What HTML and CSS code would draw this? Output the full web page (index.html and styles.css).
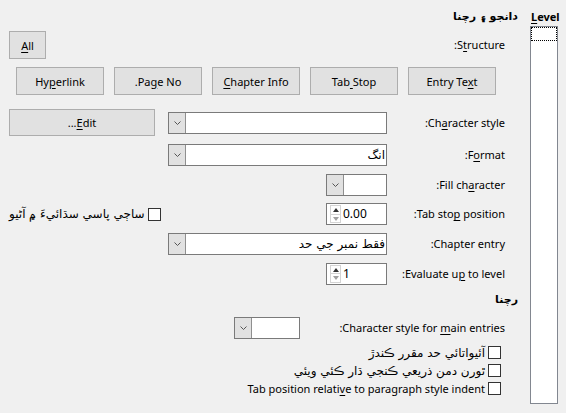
FILE: index.html
```html
<!DOCTYPE html>
<html lang="sd">
<head>
<meta charset="utf-8">
<title>Entries</title>
<link rel="stylesheet" href="styles.css">
</head>
<body>
<div class="dialog" dir="rtl">
  <div class="level-col">
    <div class="level-label" dir="ltr"><u>L</u>evel</div>
    <div class="level-list"><div class="level-focus"></div></div>
  </div>
  <div class="main">
    <div class="heading ar">دانجو ۽ رچنا</div>
    <div class="section">
      <div class="structure-row">
        <span class="label">S<u>t</u>ructure:</span>
        <button class="btn btn-all"><u>A</u>ll</button>
      </div>
      <div class="btn-row">
        <button class="btn btn-tok">Entry Te<u>x</u>t</button>
        <button class="btn btn-tok">Tab<u> </u>Stop</button>
        <button class="btn btn-tok"><u>C</u>hapter Info</button>
        <button class="btn btn-tok">Pa<u>g</u>e No.</button>
        <button class="btn btn-tok">Hy<u>p</u>erlink</button>
      </div>
      <div class="form">
        <div class="frow frow-tall">
          <span class="label lcell">Ch<u>a</u>racter style:</span>
          <div class="combo w-wide"><span class="combo-text"></span><span class="combo-btn"><svg width="7" height="4" viewBox="0 0 7 4"><path d="M0.5 0.5 L3.5 3.5 L6.5 0.5" fill="none" stroke="#555" stroke-width="1"/></svg></span></div>
          <button class="btn btn-edit"><u>E</u>dit...</button>
        </div>
        <div class="frow">
          <span class="label lcell">F<u>o</u>rmat:</span>
          <div class="combo w-wide"><span class="combo-text ar">انگ</span><span class="combo-btn"><svg width="7" height="4" viewBox="0 0 7 4"><path d="M0.5 0.5 L3.5 3.5 L6.5 0.5" fill="none" stroke="#555" stroke-width="1"/></svg></span></div>
        </div>
        <div class="frow">
          <span class="label lcell">Fill ch<u>a</u>racter:</span>
          <div class="combo w-small"><span class="combo-text"></span><span class="combo-btn"><svg width="7" height="4" viewBox="0 0 7 4"><path d="M0.5 0.5 L3.5 3.5 L6.5 0.5" fill="none" stroke="#555" stroke-width="1"/></svg></span></div>
        </div>
        <div class="frow">
          <span class="label lcell">Tab sto<u>p</u> position:</span>
          <div class="spin w-small"><span class="spin-btns"><span class="up"></span><span class="down"></span></span><span class="spin-val">0.00</span></div>
          <label class="check check-left"><span class="box"></span><span class="check-text ar">ساڄي پاسي سڌائيءَ ۾ آڻيو</span></label>
        </div>
        <div class="frow">
          <span class="label lcell">Chapter entry:</span>
          <div class="combo w-wide"><span class="combo-text ar">فقط نمبر جي حد</span><span class="combo-btn"><svg width="7" height="4" viewBox="0 0 7 4"><path d="M0.5 0.5 L3.5 3.5 L6.5 0.5" fill="none" stroke="#555" stroke-width="1"/></svg></span></div>
        </div>
        <div class="frow">
          <span class="label lcell">Evaluate u<u>p</u> to level:</span>
          <div class="spin w-small"><span class="spin-btns"><span class="up"></span><span class="down"></span></span><span class="spin-val">1</span></div>
        </div>
      </div>
    </div>
    <div class="heading heading-2 ar">رچنا</div>
    <div class="section">
      <div class="frow main-entries">
        <span class="label lcell-wide">Character style for <u>m</u>ain entries:</span>
        <div class="combo w-mini"><span class="combo-text"></span><span class="combo-btn"><svg width="7" height="4" viewBox="0 0 7 4"><path d="M0.5 0.5 L3.5 3.5 L6.5 0.5" fill="none" stroke="#555" stroke-width="1"/></svg></span></div>
      </div>
      <div class="checks">
        <label class="check"><span class="box"></span><span class="check-text ar">آئيواتائي حد مقرر ڪندڙ</span></label>
        <label class="check"><span class="box"></span><span class="check-text ar">ٿورن دمن ذريعي ڪنجي ڌار ڪئي ويئي</span></label>
        <label class="check"><span class="box"></span><span class="check-text">Tab position relati<u>v</u>e to paragraph style indent</span></label>
      </div>
    </div>
  </div>
</div>
</body>
</html>
```
FILE: styles.css
```css
* { box-sizing: border-box; }
html, body { margin: 0; padding: 0; }
body {
  width: 566px;
  height: 413px;
  overflow: hidden;
  background: #f0f0f0;
  font-family: "Noto Sans", "DejaVu Sans", sans-serif;
  font-size: 11px;
  color: #000;
}
.ar { font-family: "DejaVu Sans", sans-serif; font-size: 12px; }
u { text-decoration: underline; text-underline-offset: 2px; }

.dialog {
  display: flex;
  height: 413px;
  padding-right: 8px;
  padding-left: 9px;
  gap: 12px;
}

/* Level column */
.level-col {
  width: 28px;
  flex: none;
  display: flex;
  flex-direction: column;
  padding-top: 9px;
}
.level-label {
  font-weight: bold;
  line-height: 16px;
  height: 17px;
  padding-left: 1px;
  white-space: nowrap;
}
.level-list {
  height: 378px;
  background: #fff;
  border: 1px solid #828790;
}
.level-focus {
  height: 14px;
  border: 1px dotted #000;
}

/* Main column */
.main {
  flex: 1;
  display: flex;
  flex-direction: column;
  padding-top: 9px;
}
.heading {
  font-weight: bold;
  line-height: 16px;
  height: 16px;
  white-space: nowrap;
}
.heading.ar { font-size: 11px; }
.heading-2 { margin-top: 7px; }
.section { padding-right: 13px; }

.label { white-space: nowrap; line-height: 16px; }

.btn {
  font: inherit;
  color: #000;
  background: #e1e1e1;
  border: 1px solid #adadad;
  padding: 0;
  margin: 0;
  white-space: nowrap;
  text-align: center;
}

.structure-row {
  margin-top: 6px;
  height: 28px;
  display: flex;
  align-items: center;
}
.btn-all {
  width: 37px;
  height: 28px;
  margin-right: auto;
}

.btn-row {
  margin-top: 8px;
  display: flex;
  gap: 10px;
  padding-right: 9px;
}
.btn-tok { width: 88px; height: 28px; }

.form {
  margin-top: 14px;
  display: flex;
  flex-direction: column;
  gap: 7.8px;
}
.frow {
  display: flex;
  align-items: center;
  height: 22px;
}
.frow-tall { height: 27px; }
.lcell { width: 118px; flex: none; }
.lcell-wide { width: 205px; flex: none; }

.btn-edit {
  width: 146px;
  height: 27px;
  margin-right: auto;
}

/* combobox */
.combo {
  display: flex;
  height: 22px;
  background: #fff;
  border: 1px solid #7a7a7a;
  flex: none;
}
.w-wide { width: 219px; }
.w-small { width: 61px; }
.w-mini { width: 66px; }
.combo-text {
  flex: 1;
  line-height: 20px;
  padding-right: 1px;
  overflow: hidden;
  white-space: nowrap;
}
.combo-btn {
  width: 17px;
  flex: none;
  background: #e1e1e1;
  border-right: 1px solid #8f8f8f;
  display: flex;
  align-items: center;
  justify-content: center;
}
.combo-btn svg { display: block; }

/* spin box */
.spin {
  direction: ltr;
  display: flex;
  align-items: center;
  height: 22px;
  background: #fff;
  border: 1px solid #7a7a7a;
  flex: none;
}
.spin-btns {
  width: 11px;
  height: 18px;
  margin-left: 3px;
  border: 1px solid #d4d4d4;
  display: flex;
  flex-direction: column;
}
.spin-btns .up, .spin-btns .down {
  flex: 1;
  display: flex;
  align-items: center;
  justify-content: center;
}
.spin-btns .up { border-bottom: 1px solid #d4d4d4; }
.spin-btns .up::before {
  content: "";
  border-left: 3px solid transparent;
  border-right: 3px solid transparent;
  border-bottom: 4px solid #333;
}
.spin-btns .down::before {
  content: "";
  border-left: 3px solid transparent;
  border-right: 3px solid transparent;
  border-top: 4px solid #a0a0a0;
}
.spin-val { padding-left: 2px; line-height: 20px; font-size: 12px; }

/* checkboxes */
.check {
  display: flex;
  align-items: center;
  gap: 3px;
  white-space: nowrap;
}
.check-left { margin-right: auto; }
.box {
  width: 13px;
  height: 13px;
  flex: none;
  background: #fff;
  border: 1px solid #333;
}
.main-entries { margin-top: 9px; }
.checks {
  margin-top: 5px;
  display: flex;
  flex-direction: column;
  padding-right: 4px;
}
.checks .check { height: 18px; }
```
